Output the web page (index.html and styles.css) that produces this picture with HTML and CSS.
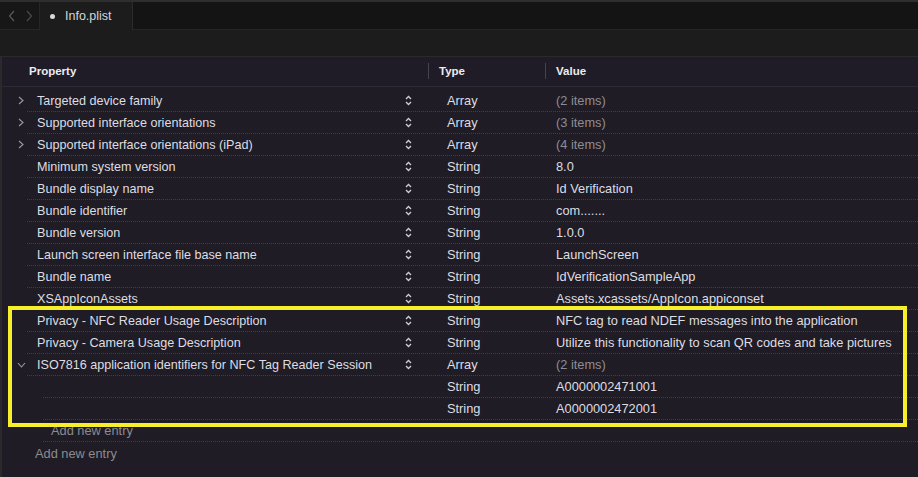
FILE: index.html
```html
<!DOCTYPE html>
<html>
<head>
<meta charset="utf-8">
<link rel="stylesheet" href="styles.css">
</head>
<body>
<div class="app">
  <div class="tabbar">
    <div class="nav">
      <svg width="8" height="12" viewBox="0 0 8 12"><path d="M6 1 L1.5 6 L6 11" fill="none" stroke="#5a5a5a" stroke-width="1.2"/></svg>
      <svg width="8" height="12" viewBox="0 0 8 12"><path d="M2 1 L6.5 6 L2 11" fill="none" stroke="#4a4a4a" stroke-width="1.2"/></svg>
    </div>
    <div class="tab"><span class="dot"></span><span class="tab-title">Info.plist</span></div>
    <div class="tab-rest"></div>
  </div>
  <div class="jumpbar"></div>
  <div class="editor">
    <div class="header">
      <div class="hcell hkey">Property</div>
      <div class="hcell htype">Type</div>
      <div class="hcell hval">Value</div>
    </div>
    <div class="rows">
      <div class="row"><div class="key"><span class="chev"><svg width="6" height="9" viewBox="0 0 6 9"><path d="M1 1 L5 4.5 L1 8" fill="none" stroke="#9b9b9f" stroke-width="1.1"/></svg></span><span class="label">Targeted device family</span><span class="stepper"><svg width="7" height="11" viewBox="0 0 7 11"><path d="M1 4 L3.5 1.5 L6 4 M1 7 L3.5 9.5 L6 7" fill="none" stroke="#d0d0d4" stroke-width="1.3"/></svg></span></div><div class="type">Array</div><div class="val muted">(2 items)</div></div>
      <div class="row"><div class="key"><span class="chev"><svg width="6" height="9" viewBox="0 0 6 9"><path d="M1 1 L5 4.5 L1 8" fill="none" stroke="#9b9b9f" stroke-width="1.1"/></svg></span><span class="label">Supported interface orientations</span><span class="stepper"><svg width="7" height="11" viewBox="0 0 7 11"><path d="M1 4 L3.5 1.5 L6 4 M1 7 L3.5 9.5 L6 7" fill="none" stroke="#d0d0d4" stroke-width="1.3"/></svg></span></div><div class="type">Array</div><div class="val muted">(3 items)</div></div>
      <div class="row"><div class="key"><span class="chev"><svg width="6" height="9" viewBox="0 0 6 9"><path d="M1 1 L5 4.5 L1 8" fill="none" stroke="#9b9b9f" stroke-width="1.1"/></svg></span><span class="label">Supported interface orientations (iPad)</span><span class="stepper"><svg width="7" height="11" viewBox="0 0 7 11"><path d="M1 4 L3.5 1.5 L6 4 M1 7 L3.5 9.5 L6 7" fill="none" stroke="#d0d0d4" stroke-width="1.3"/></svg></span></div><div class="type">Array</div><div class="val muted">(4 items)</div></div>
      <div class="row"><div class="key"><span class="chev"></span><span class="label">Minimum system version</span><span class="stepper"><svg width="7" height="11" viewBox="0 0 7 11"><path d="M1 4 L3.5 1.5 L6 4 M1 7 L3.5 9.5 L6 7" fill="none" stroke="#d0d0d4" stroke-width="1.3"/></svg></span></div><div class="type">String</div><div class="val">8.0</div></div>
      <div class="row"><div class="key"><span class="chev"></span><span class="label">Bundle display name</span><span class="stepper"><svg width="7" height="11" viewBox="0 0 7 11"><path d="M1 4 L3.5 1.5 L6 4 M1 7 L3.5 9.5 L6 7" fill="none" stroke="#d0d0d4" stroke-width="1.3"/></svg></span></div><div class="type">String</div><div class="val">Id Verification</div></div>
      <div class="row"><div class="key"><span class="chev"></span><span class="label">Bundle identifier</span><span class="stepper"><svg width="7" height="11" viewBox="0 0 7 11"><path d="M1 4 L3.5 1.5 L6 4 M1 7 L3.5 9.5 L6 7" fill="none" stroke="#d0d0d4" stroke-width="1.3"/></svg></span></div><div class="type">String</div><div class="val">com.......</div></div>
      <div class="row"><div class="key"><span class="chev"></span><span class="label">Bundle version</span><span class="stepper"><svg width="7" height="11" viewBox="0 0 7 11"><path d="M1 4 L3.5 1.5 L6 4 M1 7 L3.5 9.5 L6 7" fill="none" stroke="#d0d0d4" stroke-width="1.3"/></svg></span></div><div class="type">String</div><div class="val">1.0.0</div></div>
      <div class="row"><div class="key"><span class="chev"></span><span class="label">Launch screen interface file base name</span><span class="stepper"><svg width="7" height="11" viewBox="0 0 7 11"><path d="M1 4 L3.5 1.5 L6 4 M1 7 L3.5 9.5 L6 7" fill="none" stroke="#d0d0d4" stroke-width="1.3"/></svg></span></div><div class="type">String</div><div class="val">LaunchScreen</div></div>
      <div class="row"><div class="key"><span class="chev"></span><span class="label">Bundle name</span><span class="stepper"><svg width="7" height="11" viewBox="0 0 7 11"><path d="M1 4 L3.5 1.5 L6 4 M1 7 L3.5 9.5 L6 7" fill="none" stroke="#d0d0d4" stroke-width="1.3"/></svg></span></div><div class="type">String</div><div class="val">IdVerificationSampleApp</div></div>
      <div class="row"><div class="key"><span class="chev"></span><span class="label">XSAppIconAssets</span><span class="stepper"><svg width="7" height="11" viewBox="0 0 7 11"><path d="M1 4 L3.5 1.5 L6 4 M1 7 L3.5 9.5 L6 7" fill="none" stroke="#d0d0d4" stroke-width="1.3"/></svg></span></div><div class="type">String</div><div class="val">Assets.xcassets/AppIcon.appiconset</div></div>
      <div class="row"><div class="key"><span class="chev"></span><span class="label">Privacy - NFC Reader Usage Description</span><span class="stepper"><svg width="7" height="11" viewBox="0 0 7 11"><path d="M1 4 L3.5 1.5 L6 4 M1 7 L3.5 9.5 L6 7" fill="none" stroke="#d0d0d4" stroke-width="1.3"/></svg></span></div><div class="type">String</div><div class="val">NFC tag to read NDEF messages into the application</div></div>
      <div class="row"><div class="key"><span class="chev"></span><span class="label">Privacy - Camera Usage Description</span><span class="stepper"><svg width="7" height="11" viewBox="0 0 7 11"><path d="M1 4 L3.5 1.5 L6 4 M1 7 L3.5 9.5 L6 7" fill="none" stroke="#d0d0d4" stroke-width="1.3"/></svg></span></div><div class="type">String</div><div class="val">Utilize this functionality to scan QR codes and take pictures</div></div>
      <div class="row"><div class="key"><span class="chev"><svg width="9" height="6" viewBox="0 0 9 6"><path d="M1 1 L4.5 5 L8 1" fill="none" stroke="#9b9b9f" stroke-width="1.1"/></svg></span><span class="label">ISO7816 application identifiers for NFC Tag Reader Session</span><span class="stepper"><svg width="7" height="11" viewBox="0 0 7 11"><path d="M1 4 L3.5 1.5 L6 4 M1 7 L3.5 9.5 L6 7" fill="none" stroke="#d0d0d4" stroke-width="1.3"/></svg></span></div><div class="type">Array</div><div class="val muted">(2 items)</div></div>
      <div class="row child"><div class="key"></div><div class="type">String</div><div class="val">A0000002471001</div></div>
      <div class="row child"><div class="key"></div><div class="type">String</div><div class="val">A0000002472001</div></div>
      <div class="row child add"><div class="key"><span class="addlabel">Add new entry</span></div><div class="type"></div><div class="val"></div></div>
      <div class="row top-add"><span class="addlabel">Add new entry</span></div>
    </div>
    <div class="highlight"></div>
  </div>
</div>
</body>
</html>
```
FILE: styles.css
```css
* { box-sizing: border-box; }
html, body { margin: 0; padding: 0; }
body {
  width: 918px;
  height: 477px;
  overflow: hidden;
  background: #1f1c25;
  font-family: "Liberation Sans", Arial, sans-serif;
  font-size: 12.8px;
  color: #dedde2;
}
.app { height: 477px; display: flex; flex-direction: column; border-top: 2px solid #2e2e2e; }
.tabbar {
  height: 28px;
  display: flex;
  background: #141414;
  border-bottom: 1px solid #262626;
}
.nav {
  width: 40px;
  display: flex;
  align-items: center;
  gap: 9px;
  padding-left: 8px;
  background: #171717;
  border-right: 1px solid #262626;
}
.tab {
  width: 93px;
  display: flex;
  align-items: center;
  background: #1c1c1c;
  border-right: 1px solid #2c2c2c;
  margin-bottom: -1px;
  padding-left: 10px;
}
.dot { width: 5px; height: 5px; border-radius: 50%; background: #d8d8d8; margin-right: 10px; }
.tab-title { font-size: 12.5px; color: #d6d6d6; }
.tab-rest { flex: 1; }
.jumpbar {
  height: 27px;
  background: #1c1c1c;
  border-bottom: 1px solid #2a2a2a;
}
.editor {
  position: relative;
  flex: 1;
  border-left: 2px solid #2a2a2d;
}
.header {
  height: 30px;
  display: grid;
  grid-template-columns: 426px 117px 1fr;
  align-items: center;
  background: #1f1c27;
  border-bottom: 1px solid #2e2b35;
  font-weight: bold;
  font-size: 11.5px;
  color: #ececf0;
}
.hcell { height: 16px; line-height: 16px; margin-top: -2px; }
.hkey { padding-left: 27px; }
.htype { border-left: 1px solid #45434b; padding-left: 10px; }
.hval { border-left: 1px solid #45434b; padding-left: 10px; }
.rows { padding-top: 3px; }
.row {
  height: 22px;
  margin-left: 25px;
  display: grid;
  grid-template-columns: 401px 117px 1fr;
  align-items: center;
  border-bottom: 1px dotted #403e47;
}
.row.child { margin-left: 41px; grid-template-columns: 385px 117px 1fr; }
.row.top-add { border-bottom: none; display: flex; padding-left: 8px; }
.key { display: flex; align-items: center; height: 21px; }
.chev { width: 12px; margin-left: -12px; display: flex; align-items: center; justify-content: center; }
.label { margin-left: 10px; flex: 1; white-space: nowrap; font-size: 12.6px; }
.stepper { width: 7px; margin-right: 16px; display: flex; }
.type { padding-left: 19px; }
.val { padding-left: 11px; white-space: nowrap; }
.muted { color: #8e8d94; }
.addlabel { color: #8c8b91; }
.row.add .key { padding-left: 8px; }
.highlight {
  position: absolute;
  left: 6px;
  top: 249px;
  width: 899px;
  height: 121px;
  border: 4px solid #f8ef2c;
  pointer-events: none;
}
```
